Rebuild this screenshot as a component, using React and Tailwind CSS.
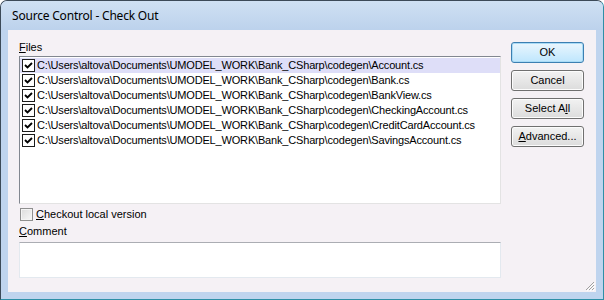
const files = [
  'Account.cs',
  'Bank.cs',
  'BankView.cs',
  'CheckingAccount.cs',
  'CreditCardAccount.cs',
  'SavingsAccount.cs',
]

const base = 'C:\\Users\\altova\\Documents\\UMODEL_WORK\\Bank_CSharp\\codegen\\'

function Check() {
  return (
    <span className="flex h-[13px] w-[13px] shrink-0 items-center justify-center border border-[#1c1c1c] bg-white">
      <svg width="9" height="9" viewBox="0 0 9 9">
        <path d="M1 4 L3.5 6.5 L8 2" fill="none" stroke="#000" strokeWidth="1.9" />
      </svg>
    </span>
  )
}

function Button({ children, primary }) {
  return (
    <button
      className={`h-[21px] w-[73px] rounded-[3px] border text-[11px] text-black ${
        primary
          ? 'border-[#3c7fb1] bg-gradient-to-b from-[#eaf6fd] to-[#bee6fd] shadow-[inset_0_0_0_1px_#a9dbf6]'
          : 'border-[#707070] bg-gradient-to-b from-[#f2f2f2] to-[#dcdcdc] shadow-[inset_0_0_0_1px_#fcfcfc]'
      }`}
    >
      {children}
    </button>
  )
}

export default function App() {
  return (
    <div className="flex h-[300px] w-[604px] flex-col rounded-t-[7px] border border-[#3c4a58] border-b-[#2e8fa6] border-r-[#2e8fa6] bg-[#bfd4ee] font-['Liberation_Sans',Arial,sans-serif]">
      <div className="flex h-[29px] shrink-0 items-center rounded-t-[6px] bg-gradient-to-b from-[#cfe0f3] to-[#bcd2ec] pl-[11px] font-['Noto_Sans',sans-serif] text-[12px] tracking-[-0.2px] text-black">
        Source Control - Check Out
      </div>
      <div className="mx-[7px] mb-[7px] flex flex-1 bg-[#f5f1f5]">
        <div className="ml-[11px] flex w-[482px] flex-col pt-[11px]">
          <div className="mb-[2px] h-[13px] text-[11px] leading-[13px] text-black">
            <span className="underline">F</span>iles
          </div>
          <div className="h-[148px] border border-[#828790] border-b-[#e3e3e3] border-r-[#e3e3e3] bg-white pt-[1px]">
            {files.map((f, i) => (
              <div
                key={f}
                className={`flex h-[15px] items-center gap-[2px] pl-[2px] text-[11px] tracking-[-0.17px] text-black ${
                  i === 0 ? 'bg-[#dedef8]' : ''
                }`}
              >
                <Check />
                <span>{base + f}</span>
              </div>
            ))}
          </div>
          <div className="mt-[3px] flex h-[15px] items-center gap-[3px] pl-[1px] text-[11px] text-black">
            <span className="h-[13px] w-[13px] border border-[#8f8f8f] bg-gradient-to-br from-[#dcdcdc] to-[#f8f8f8] shadow-[inset_0_0_0_1px_#f4f4f4]" />
            <span>
              <span className="underline">C</span>heckout local version
            </span>
          </div>
          <div className="mt-[3px] h-[14px] text-[11px] leading-[13px] text-black">
            <span className="underline">C</span>omment
          </div>
          <div className="mt-[3px] h-[36px] border border-[#e3e9ef] border-t-[#abadb3] bg-white" />
        </div>
        <div className="ml-[10px] flex flex-col gap-[7px] pt-[12px]">
          <Button primary>OK</Button>
          <Button>Cancel</Button>
          <Button>
            Select A<span className="underline">l</span>l
          </Button>
          <Button>
            <span className="underline">A</span>dvanced...
          </Button>
        </div>
        <div className="relative flex-1">
          <svg className="absolute bottom-[1px] right-[1px]" width="10" height="10" viewBox="0 0 10 10">
            <path d="M9 1 L1 9 M9 4 L4 9 M9 7 L7 9" stroke="#a0a0a0" strokeWidth="1" />
            <path d="M10 2 L2 10 M10 5 L5 10 M10 8 L8 10" stroke="#ffffff" strokeWidth="1" />
          </svg>
        </div>
      </div>
    </div>
  )
}
